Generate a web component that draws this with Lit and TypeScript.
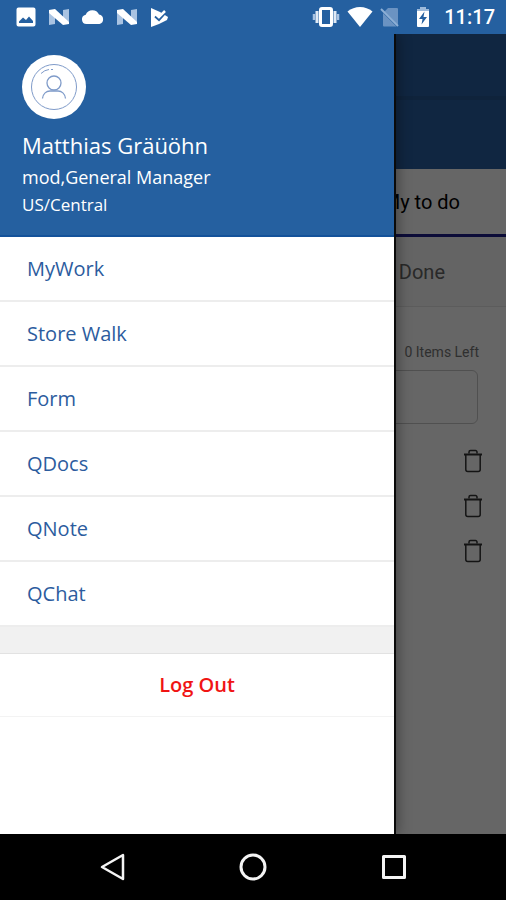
import { LitElement, html, css, svg } from "lit";
import { customElement, state } from "lit/decorators.js";

const photoIcon = html`<svg class="icon" width="22" height="22" viewBox="0 0 22 22" aria-hidden="true">
  <path fill="#fff" fill-rule="evenodd" d="M3.500 1.500h15a2 2 0 0 1 2 2v15a2 2 0 0 1-2 2h-15a2 2 0 0 1-2-2v-15a2 2 0 0 1 2-2zM4 17h14v-2l-4-4.500-3 3.500-3-2.500-4 4z"/>
</svg>`;

const nougatIcon = html`<svg class="icon" width="22" height="20" viewBox="0 0 22 20" aria-hidden="true">
  <path fill="#a9c3e2" d="M1 3h6v14l-6 1zM21 2v14h-6V3z"/>
  <path fill="#fff" d="M1 3l6-1 14 13v2l-6 1L1 6z"/>
</svg>`;

const cloudIcon = html`<svg class="icon" width="24" height="20" viewBox="0 0 24 20" aria-hidden="true">
  <path fill="#fff" d="M5.500 17a4.700 4.700 0 0 1-.8-9.300A7.200 7.200 0 0 1 18 7.600 4.800 4.800 0 0 1 18.500 17z"/>
</svg>`;

const playCheckIcon = html`<svg class="icon" width="22" height="22" viewBox="0 0 22 22" aria-hidden="true">
  <path fill="#fff" d="M2 2l9 4 8 5-1 3-8 4-8 3z"/>
  <path fill="none" stroke="#2560a0" stroke-width="2" d="M6 10.500l4 3.500 8-9"/>
  <path fill="none" stroke="#fff" stroke-width="2.500" d="M7 8l3 3 6-6"/>
</svg>`;

const vibrateIcon = html`<svg class="icon" width="28" height="22" viewBox="0 0 28 22" aria-hidden="true">
  <rect x="8.500" y="2.500" width="11" height="17" rx="1.500" fill="none" stroke="#fff" stroke-width="3"/>
  <path stroke="#dfe9f5" stroke-width="3" d="M5 5v12M23 5v12"/>
  <path stroke="#a9c3e2" stroke-width="2.500" d="M2 8v6M26 8v6"/>
</svg>`;

const wifiIcon = html`<svg class="icon" width="26" height="22" viewBox="0 0 26 22" aria-hidden="true">
  <path fill="#fff" d="M13 21L.5 5.500Q6 1 13 1t12.500 4.500z"/>
</svg>`;

const noSimIcon = html`<svg class="icon" width="20" height="22" viewBox="0 0 20 22" aria-hidden="true">
  <path fill="#6b93c2" d="M8 2h9a1 1 0 0 1 1 1v16L4.500 5.500zM3 7l13.500 13.500H4a1 1 0 0 1-1-1z"/>
  <path stroke="#8fb0d6" stroke-width="2" d="M1 3l17 17"/>
</svg>`;

const batteryIcon = html`<svg class="icon" width="16" height="22" viewBox="0 0 16 22" aria-hidden="true">
  <path fill="#9dbadb" d="M5 1h6v2h3v4H2V3h3z"/>
  <path fill="#fff" d="M2 5h12v15a1 1 0 0 1-1 1H3a1 1 0 0 1-1-1z"/>
  <path fill="#2560a0" d="M9.500 5.500L4 13h3.500l-1 5.500L12 11H8.500z"/>
</svg>`;

const avatarIcon = html`<svg width="64" height="64" viewBox="0 0 64 64" aria-hidden="true">
  <circle cx="32" cy="32" r="32" fill="#fff"/>
  <g fill="none" stroke="#7f9bc9">
    <circle cx="32" cy="32" r="22.500"/>
    <circle cx="32" cy="28" r="7" stroke-width="1.300"/>
    <path stroke-width="1.300" d="M20.500 43.500c.5-5 4-7.500 7.500-7.500h8c3.500 0 7 2.500 7.500 7.500"/>
    <path d="M19 18.500q3.500-3.500 8-4M29 14.500h2"/>
  </g>
</svg>`;

const trashIcon = html`<svg width="20" height="24" viewBox="0 0 20 24" aria-hidden="true">
  <g fill="none" stroke="#333">
    <path stroke-width="2" d="M1 5.500h18"/>
    <path stroke-width="1.500" d="M6 4.500V3a1.500 1.500 0 0 1 1.500-1.500h5A1.500 1.500 0 0 1 14 3v1.500"/>
    <path stroke-width="1.500" d="M2.800 5v15.500a2 2 0 0 0 2 2h10.400a2 2 0 0 0 2-2V5"/>
  </g>
</svg>`;

const navShape = (shape: unknown) => html`<svg width="30" height="30" viewBox="0 0 30 30" aria-hidden="true">
  <g fill="none" stroke="#f4f4f4" stroke-width="3" stroke-linejoin="round">${shape}</g>
</svg>`;

@customElement("app-status-bar")
class StatusBar extends LitElement {
  static styles = css`
    :host {
      display: flex;
      justify-content: space-between;
      align-items: center;
      height: 34px;
      padding: 0 11px 0 15px;
      background: #2560a0;
      color: #fff;
      font: 500 20px/34px Roboto, sans-serif;
    }
    .group { display: flex; align-items: center; }
    .icon { display: block; }
    .left { gap: 11px; }
    .right { gap: 7px; }
    .power { display: flex; align-items: center; gap: 13px; margin-left: 8px; }
  `;

  render() {
    return html`
      <div class="group left">${photoIcon}${nougatIcon}${cloudIcon}${nougatIcon}${playCheckIcon}</div>
      <div class="group right">
        ${vibrateIcon}${wifiIcon}${noSimIcon}
        <div class="power">${batteryIcon}<time>11:17</time></div>
      </div>
    `;
  }
}

@customElement("app-todo-page")
class TodoPage extends LitElement {
  static styles = css`
    :host {
      display: block;
      height: 100%;
      background: #fff;
      font-family: Roboto, sans-serif;
    }
    .bar { height: 62px; background: #2960a2; border-bottom: 4px solid #265893; }
    .subbar { height: 69px; background: #2960a2; }
    .tab {
      display: flex;
      align-items: center;
      justify-content: flex-end;
      box-sizing: border-box;
      width: 100%;
      height: 68px;
      padding: 0 46px 0 0;
      border: 0;
      border-bottom: 3px solid #20208c;
      background: #fff;
      color: #000;
      font: 400 20px/24px Roboto, sans-serif;
    }
    .done {
      height: 70px;
      padding-right: 61px;
      border-bottom: 1px solid #e6e6e6;
      background: #fafafa;
      color: #666;
    }
    .left {
      margin: 0;
      padding: 36px 27px 9px;
      color: #777;
      font-size: 14px;
      line-height: 18px;
      text-align: right;
    }
    .entry {
      display: block;
      box-sizing: border-box;
      width: calc(100% - 56px);
      height: 54px;
      margin: 0 28px 14px;
      border: 1px solid #c8c8c8;
      border-radius: 6px;
      background: transparent;
    }
    .list { margin: 0; padding: 0 23px; list-style: none; }
    .item { display: flex; justify-content: flex-end; align-items: center; height: 45px; }
    .trash { display: flex; padding: 0; border: 0; background: none; }
  `;

  render() {
    return html`
      <div class="bar"></div>
      <div class="subbar"></div>
      <button class="tab">My to do</button>
      <button class="tab done">Done</button>
      <p class="left">0 Items Left</p>
      <input class="entry" type="text" aria-label="New item" />
      <ul class="list">
        ${[1, 2, 3].map(
          (n) => html`<li class="item"><button class="trash" aria-label="Delete item ${n}">${trashIcon}</button></li>`
        )}
      </ul>
    `;
  }
}

@customElement("app-drawer")
class Drawer extends LitElement {
  static styles = css`
    :host {
      display: block;
      background: #fff;
      font-family: "Open Sans", sans-serif;
    }
    .profile {
      box-sizing: border-box;
      padding: 21px 22px 18px;
      border-bottom: 2px solid #14529a;
      background: #2560a0;
      color: #fff;
    }
    .avatar { display: block; height: 64px; margin-bottom: 10px; }
    .name, .role, .zone { margin: 0; font-weight: 400; }
    .name { font-size: 22px; line-height: 32px; }
    .role { font-size: 18px; line-height: 32px; }
    .zone { font-size: 17px; line-height: 24px; }
    .menu { margin: 0; padding: 0; list-style: none; }
    .entry { border-bottom: 2px solid #ededed; }
    .link {
      display: block;
      padding: 0 27px;
      color: #2c5c9e;
      font-size: 20px;
      line-height: 63px;
      text-decoration: none;
    }
    .gap { height: 26px; border-bottom: 1px solid #e2e2e2; background: #f1f1f1; }
    .logout {
      display: block;
      width: 100%;
      height: 63px;
      padding: 0;
      border: 0;
      border-bottom: 1px solid #f3f3f3;
      background: #fff;
      color: #f01414;
      font: 600 20px/62px "Open Sans", sans-serif;
    }
  `;

  render() {
    const entries = ["MyWork", "Store Walk", "Form", "QDocs", "QNote", "QChat"];
    return html`
      <header class="profile">
        <div class="avatar">${avatarIcon}</div>
        <h1 class="name">Matthias Gräüöhn</h1>
        <p class="role">mod,General Manager</p>
        <p class="zone">US/Central</p>
      </header>
      <nav>
        <ul class="menu">
          ${entries.map((label) => html`<li class="entry"><a class="link" href="#">${label}</a></li>`)}
        </ul>
      </nav>
      <div class="gap"></div>
      <button class="logout">Log Out</button>
    `;
  }
}

@customElement("app-nav-bar")
class NavBar extends LitElement {
  static styles = css`
    :host {
      display: flex;
      justify-content: center;
      gap: 22%;
      height: 66px;
      background: #000;
    }
    .key { display: flex; align-items: center; padding: 0; border: 0; background: none; }
  `;

  render() {
    return html`
      <button class="key" aria-label="Back">${navShape(svg`<path stroke-width="2.500" d="M5 15L26 3v24z"/>`)}</button>
      <button class="key" aria-label="Home">${navShape(svg`<circle cx="15" cy="15" r="12"/>`)}</button>
      <button class="key" aria-label="Recent apps">${navShape(svg`<path d="M4.500 4.500h21v21h-21z"/>`)}</button>
    `;
  }
}

@customElement("app-root")
class AppRoot extends LitElement {
  static styles = css`
    :host { display: flex; flex-direction: column; min-height: 100vh; }
    .stage { position: relative; flex: 1; background: #fff; }
    .scrim { position: absolute; inset: 0; background: rgba(0, 0, 0, 0.6); }
    .drawer {
      position: absolute;
      inset: 0 112px 0 0;
      box-shadow: 2px 0 0 #0a0a0a, 4px 0 12px rgba(0, 0, 0, 0.35);
      clip-path: inset(0 -20px 0 0);
    }
  `;

  @state() private open = true;

  render() {
    return html`
      <app-status-bar></app-status-bar>
      <main class="stage">
        <app-todo-page></app-todo-page>
        ${this.open
          ? html`<div class="scrim" @click=${() => (this.open = false)}></div><app-drawer class="drawer"></app-drawer>`
          : null}
      </main>
      <app-nav-bar></app-nav-bar>
    `;
  }
}
